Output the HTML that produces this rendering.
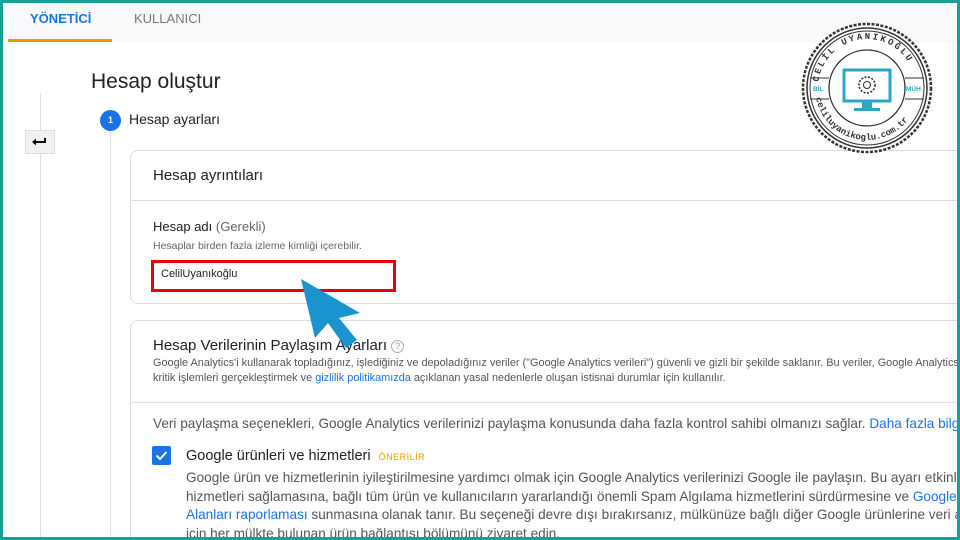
<!DOCTYPE html>
<html style="overflow:hidden;height:540px"><head><meta charset="utf-8"><style>
*{margin:0;padding:0;box-sizing:border-box}
body{width:960px;height:540px;overflow:hidden;background:#fff;font-family:"Liberation Sans",sans-serif;color:#3c4043;position:relative}
#w{position:absolute;left:0;top:0;width:960px;height:540px;overflow:hidden}
.a{position:absolute;white-space:nowrap;overflow:hidden}
.frame{position:absolute;left:0;top:0;width:960px;height:540px;border:3px solid #17a09b;z-index:20;pointer-events:none}
.blue{color:#1a73e8}
.card{border:1px solid #dadce0;border-right:none;border-radius:8px 0 0 8px}
</style></head><body><div id="w">
<div class="a" style="left:0;top:0;width:960px;height:42px;background:#f8f9fa"></div>
<div class="a" style="left:30px;top:11px;font-size:13px;font-weight:bold;color:#1a73e8">YÖNETİCİ</div>
<div class="a" style="left:134px;top:11px;font-size:13px;color:#777">KULLANICI</div>
<div class="a" style="left:8px;top:39px;width:104px;height:3px;background:#f29900"></div>

<div class="a" style="left:91px;top:70px;font-size:21px;color:#202124">Hesap oluştur</div>
<div class="a" style="left:40px;top:93px;width:1px;height:447px;background:#ddd"></div>
<div class="a" style="left:25px;top:130px;width:30px;height:24px;background:#f1f1f1;border:1px solid #ddd"></div>
<svg class="a" style="left:25px;top:130px" width="30" height="24"><path d="M8 12h12V8" stroke="#111" stroke-width="2" fill="none"/><path d="M7 12l4-3.5v7z" fill="#111"/></svg>

<div class="a" style="left:100px;top:110px;width:21px;height:21px;border-radius:50%;background:#1a73e8;color:#fff;font-size:9px;text-align:center;line-height:21px;font-weight:bold">1</div>
<div class="a" style="left:129px;top:111px;font-size:14px;color:#202124">Hesap ayarları</div>
<div class="a" style="left:110px;top:132px;width:1px;height:408px;background:#ddd"></div>

<div class="a card" style="left:130px;top:150px;width:830px;height:154px"></div>
<div class="a" style="left:130px;top:200px;width:830px;height:1px;background:#e0e0e0"></div>
<div class="a" style="left:153px;top:167px;font-size:15px;color:#202124">Hesap ayrıntıları</div>
<div class="a" style="left:153px;top:219px;font-size:13px;color:#202124">Hesap adı <span style="color:#666">(Gerekli)</span></div>
<div class="a" style="left:153px;top:240px;font-size:10.5px;color:#666">Hesaplar birden fazla izleme kimliği içerebilir.</div>
<div class="a" style="left:151px;top:260px;width:245px;height:32px;border:3px solid #e8000b;background:#fff"></div>
<div class="a" style="left:161px;top:268px;font-size:11px;color:#202124">CelilUyanıkoğlu</div>

<div class="a card" style="left:130px;top:320px;width:830px;height:220px;border-bottom:none;border-radius:8px 0 0 0"></div>
<div class="a" style="left:130px;top:402px;width:830px;height:1px;background:#e0e0e0"></div>
<div class="a" style="left:153px;top:337px;font-size:15px;color:#202124">Hesap Verilerinin Paylaşım Ayarları <span style="display:inline-block;width:13px;height:13px;border:1px solid #aaa;border-radius:50%;font-size:9px;text-align:center;line-height:11px;color:#999;vertical-align:1px">?</span></div>
<div class="a" style="left:153px;top:357px;width:807px;font-size:10.9px;color:#555">Google Analytics'i kullanarak topladığınız, işlediğiniz ve depoladığınız veriler ("Google Analytics verileri") güvenli ve gizli bir şekilde saklanır. Bu veriler, Google Analytics</div>
<div class="a" style="left:153px;top:372px;width:807px;font-size:10.9px;color:#555">kritik işlemleri gerçekleştirmek ve <span class="blue">gizlilik politikamızda</span> açıklanan yasal nedenlerle oluşan istisnai durumlar için kullanılır.</div>
<div class="a" style="left:153px;top:416px;width:807px;font-size:13.6px;color:#555">Veri paylaşma seçenekleri, Google Analytics verilerinizi paylaşma konusunda daha fazla kontrol sahibi olmanızı sağlar. <span class="blue">Daha fazla bilgi edinin</span></div>

<div class="a" style="left:152px;top:446px;width:19px;height:19px;background:#1a73e8;border-radius:2px"></div>
<svg class="a" style="left:152px;top:446px" width="19" height="19"><path d="M4.5 9.5l3.5 3.5 6.5-7" stroke="#fff" stroke-width="2" fill="none"/></svg>
<div class="a" style="left:186px;top:448px;font-size:14.5px;color:#202124">Google ürünleri ve hizmetleri <span style="font-size:9px;color:#f29900;letter-spacing:.5px;margin-left:4px">ÖNERİLİR</span></div>
<div class="a" style="left:186px;top:469px;width:774px;height:71px;font-size:13.6px;color:#555;line-height:18.5px">Google ürün ve hizmetlerinin iyileştirilmesine yardımcı olmak için Google Analytics verilerinizi Google ile paylaşın. Bu ayarı etkinleştirmek<br>hizmetleri sağlamasına, bağlı tüm ürün ve kullanıcıların yararlandığı önemli Spam Algılama hizmetlerini sürdürmesine ve <span class="blue">Google sinyalleri</span><br><span class="blue">Alanları raporlaması</span> sunmasına olanak tanır. Bu seçeneği devre dışı bırakırsanız, mülkünüze bağlı diğer Google ürünlerine veri akışı<br>için her mülkte bulunan ürün bağlantısı bölümünü ziyaret edin.</div>

<svg class="a" style="left:290px;top:270px" width="80" height="85"><polygon points="11,9 70,43 49,48 67,70 56,78 38,53 25,68" fill="#1a93cf"/></svg>

<svg class="a" style="left:800px;top:20px" width="135" height="135" viewBox="0 0 135 135">
<circle cx="67" cy="68" r="64" fill="#fff" stroke="#333" stroke-width="2.5" stroke-dasharray="3 1.5"/>
<circle cx="67" cy="68" r="60" fill="none" stroke="#333" stroke-width="1.5"/>
<circle cx="67" cy="68" r="57" fill="none" stroke="#333" stroke-width="1"/>
<circle cx="67" cy="68" r="38" fill="none" stroke="#333" stroke-width="1.3"/>
<line x1="10" y1="58" x2="29" y2="58" stroke="#333"/><line x1="10" y1="79" x2="29" y2="79" stroke="#333"/>
<line x1="105" y1="58" x2="124" y2="58" stroke="#333"/><line x1="105" y1="79" x2="124" y2="79" stroke="#333"/>
<text x="13" y="71" font-size="6.5" fill="#2aa6c9" font-family="Liberation Sans" font-weight="bold">BİL</text>
<text x="106" y="71" font-size="6.5" fill="#2aa6c9" font-family="Liberation Sans" font-weight="bold">MÜH</text>
<defs><path id="t1" d="M18 68 A49 49 0 0 1 116 68"/><path id="t2" d="M15 68 A52 52 0 0 0 119 68"/></defs>
<text font-size="9" font-family="Liberation Mono" font-weight="bold" fill="#333" letter-spacing="2.2"><textPath href="#t1" startOffset="6">CELİL UYANIKOĞLU</textPath></text>
<text font-size="9" font-family="Liberation Mono" font-weight="bold" fill="#333"><textPath href="#t2" startOffset="10">celiluyanikoglu.com.tr</textPath></text>
<rect x="44" y="50" width="46" height="31" fill="#fff" stroke="#2aa6c9" stroke-width="3"/>
<rect x="62" y="81" width="10" height="8" fill="#2aa6c9"/><rect x="54" y="88" width="26" height="3" fill="#2aa6c9"/>
<circle cx="67" cy="65" r="8" fill="none" stroke="#333" stroke-width="1.6" stroke-dasharray="2 1.5"/><circle cx="67" cy="65" r="3.5" fill="none" stroke="#333"/>
</svg>
<div class="frame"></div>
</div></body></html>
